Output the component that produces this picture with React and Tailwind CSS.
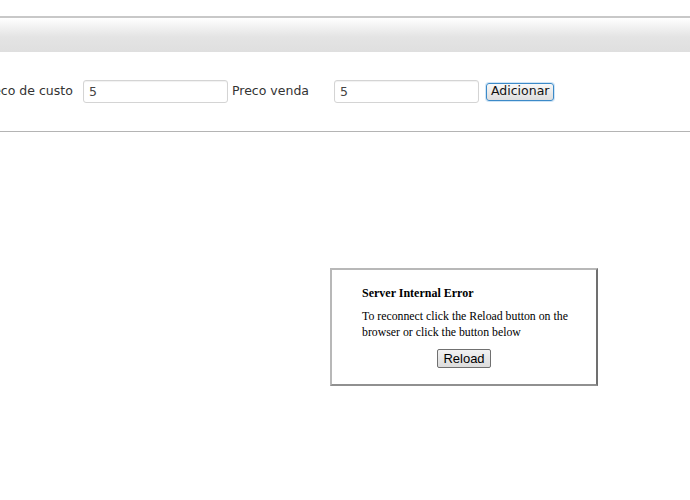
import React from 'react';

const Field = ({ label }) => (
    <div className="flex items-center">
        <span className="w-[102px] shrink-0 text-[12.5px] text-[#333]">{label}</span>
        <input
            type="text"
            defaultValue="5"
            className="w-[145px] h-[23px] border border-[#d4d4d4] rounded-[3px] px-[5px] text-[12.5px] text-[#444] bg-white shadow-[inset_0_1px_1px_rgba(0,0,0,0.06)] outline-none"
        />
    </div>
);

const App = () => {
    return (
        <div className="w-[690px] h-[500px] bg-white overflow-hidden font-['DejaVu_Sans',sans-serif]">
            <div className="h-[16px]" />
            <div className="h-[2px] bg-[#c8c8c8]" />
            <div className="h-[34px] bg-gradient-to-b from-[#ffffff] via-[#e4e4e4] to-[#dfdfdf] from-[0%] via-[55%] to-[100%]" />
            <div className="h-[79px] flex items-center gap-[4px] ml-[-19px]">
                <Field label="Preco de custo" />
                <Field label="Preco venda" />
                <button className="ml-[3px] h-[18px] px-[4px] text-[12.5px] leading-none text-[#111] border border-[#3c8ac8] rounded-[3px] bg-gradient-to-b from-[#f8f8f8] to-[#dedede] shadow-[0_0_0_1px_rgba(120,180,230,0.35)]">
                    Adicionar
                </button>
            </div>
            <div className="h-[1px] bg-[#b4b4b4]" />

            <div className="flex pt-[136px] pl-[330px]">
                <div className="w-[268px] h-[118px] bg-white border-2 border-t-[#b8b8b8] border-l-[#b8b8b8] border-r-[#707070] border-b-[#909090] pl-[30px] pr-[20px] pt-[16px] font-['Liberation_Serif',serif] text-[11.8px] text-black">
                    <div className="font-bold text-[12px] leading-[14px]">Server Internal Error</div>
                    <p className="mt-[8px] leading-[16px]">
                        To reconnect click the Reload button on the browser or click the button below
                    </p>
                    <div className="flex justify-center pr-[10px] mt-[9px]">
                        <button className="h-[19px] px-[5px] font-['Liberation_Sans',sans-serif] text-[13px] leading-none border border-[#707070] rounded-[2px] bg-gradient-to-b from-[#f2f2f2] to-[#dcdcdc]">
                            Reload
                        </button>
                    </div>
                </div>
            </div>
        </div>
    );
};

export default App;
